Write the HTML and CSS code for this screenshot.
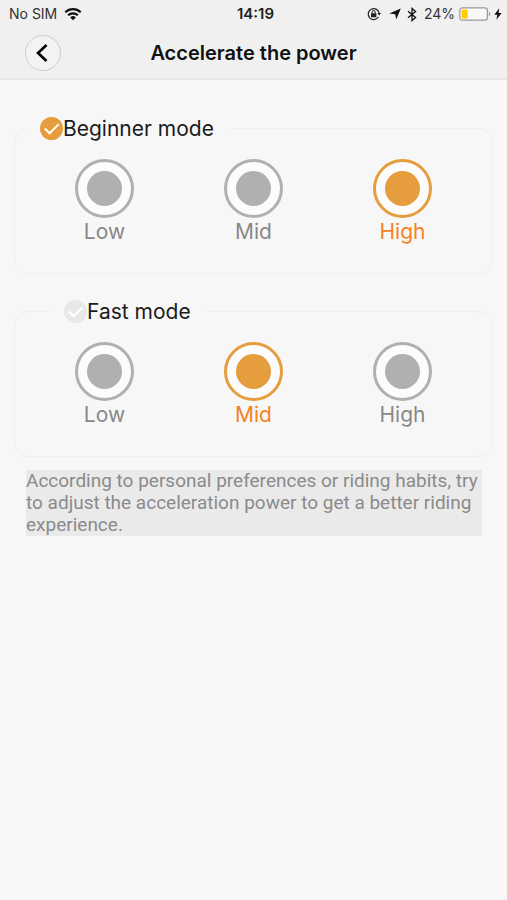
FILE: index.html
```html
<!DOCTYPE html>
<html lang="en">
<head>
<meta charset="utf-8">
<meta name="viewport" content="width=device-width, initial-scale=1">
<title>Accelerate the power</title>
<link rel="stylesheet" href="styles.css">
</head>
<body>
<header class="header">
  <div class="status">
    <div class="status-left">
      <span>No SIM</span>
      <svg width="18" height="14" viewBox="0 0 18 14" fill="none" stroke="#111" stroke-width="2.2" aria-hidden="true">
        <path d="M1.3 5.3a11 11 0 0 1 15.4 0M4.1 8.3a7 7 0 0 1 9.8 0"/>
        <path d="M6.2 10.4a4 4 0 0 1 5.6 0L9 13.2z" fill="#111" stroke="none"/>
      </svg>
    </div>
    <time class="clock">14:19</time>
    <div class="status-right">
      <svg width="14" height="14" viewBox="0 0 14 14" fill="none" stroke="#222" aria-hidden="true">
        <path d="M11.4 10A5.500 5.500 0 1 1 12.100 6" stroke-width="1.2"/>
        <path d="M10.300 6h3.700l-1.800 2.600z" fill="#222" stroke="none"/>
        <rect x="4" y="6.200" width="5.400" height="4" rx=".5" fill="#222" stroke="none"/>
        <path d="M5.200 6.500V5a1.500 1.500 0 0 1 3 0v1.500"/>
      </svg>
      <svg class="arrow" width="12" height="12" viewBox="0 0 12 12" aria-hidden="true"><path d="M11.800.4 7.200 11.600 6.300 6.200.2 5.600z" fill="#111"/></svg>
      <svg class="bluetooth" width="10" height="15" viewBox="0 0 10 15" fill="none" stroke="#111" stroke-width="1.3" aria-hidden="true"><path d="M1 4.200 8.600 10.600 5 13.600V1.400L8.600 4.400 1 10.800"/></svg>
      <span>24%</span>
      <svg class="battery" width="32" height="14" viewBox="0 0 32 14" aria-hidden="true">
        <rect x=".8" y=".8" width="27.600" height="12.400" rx="2.600" fill="#f8f8f8" stroke="#999" stroke-width="1.2"/>
        <rect x="2.600" y="2.400" width="6" height="9.200" rx=".8" fill="#fc0"/>
        <path d="M29.800 4.800q1.500.6 1.500 2.200t-1.500 2.200z" fill="#999"/>
      </svg>
      <svg class="bolt" width="8" height="12" viewBox="0 0 8 12" aria-hidden="true"><path d="M5.200.3.3 6.800h3L2.400 11.700 7.700 4.900H4.600z" fill="#111"/></svg>
    </div>
  </div>
  <div class="nav">
    <button class="back" type="button" aria-label="Back">
      <svg width="12" height="20" viewBox="0 0 12 20" fill="none" stroke="#000" stroke-width="2.6" aria-hidden="true"><path d="M10.500 2 2 10l8.500 8"/></svg>
    </button>
    <h1 class="title">Accelerate the power</h1>
  </div>
</header>
<main class="content">
  <fieldset class="mode">
    <legend class="mode-head">
      <label class="mode-label">
        <span class="check">
          <input type="radio" name="mode" checked>
          <svg viewBox="0 0 24 24" fill="none" stroke="#fff" stroke-width="2" aria-hidden="true"><path d="m5 12 5 5 9.500-9.500"/></svg>
        </span>Beginner mode
      </label>
    </legend>
    <div class="levels">
      <label class="level"><input type="radio" name="beginner"><span>Low</span></label>
      <label class="level"><input type="radio" name="beginner"><span>Mid</span></label>
      <label class="level"><input type="radio" name="beginner" checked><span>High</span></label>
    </div>
  </fieldset>
  <fieldset class="mode">
    <legend class="mode-head mode-head-inset">
      <label class="mode-label">
        <span class="check">
          <input type="radio" name="mode">
          <svg viewBox="0 0 24 24" fill="none" stroke="#fff" stroke-width="2" aria-hidden="true"><path d="m5 12 5 5 9.500-9.500"/></svg>
        </span>Fast mode
      </label>
    </legend>
    <div class="levels">
      <label class="level"><input type="radio" name="fast"><span>Low</span></label>
      <label class="level"><input type="radio" name="fast" checked><span>Mid</span></label>
      <label class="level"><input type="radio" name="fast"><span>High</span></label>
    </div>
  </fieldset>
  <p class="hint">According to personal preferences or riding habits, try to adjust the acceleration power to get a better riding experience.</p>
</main>
</body>
</html>
```
FILE: styles.css
```css
* {
  box-sizing: border-box;
}

body {
  margin: 0;
  min-height: 100vh;
  background: #f7f7f7;
  color: #1c1c1c;
  font-family: Inter, "Liberation Sans", sans-serif;
}

.header {
  background: #f0f0f0;
  border-bottom: 2px solid #e6e6e6;
}

.status {
  display: grid;
  grid-template-columns: 1fr auto 1fr;
  align-items: center;
  height: 28px;
  padding: 0 5px 0 9px;
  font-size: 14px;
  line-height: 16px;
  color: #333;
}

.status-left,
.status-right {
  display: flex;
  align-items: center;
}

.status-left {
  gap: 7px;
}

.status-right {
  justify-content: flex-end;
}

.arrow {
  margin-left: 8px;
}

.bluetooth {
  margin: 0 7px 0 6px;
}

.battery {
  margin: 0 3px 0 4px;
}

.clock {
  font-weight: 600;
  font-size: 15px;
  color: #222;
}

.nav {
  display: grid;
  grid-template-columns: 36px 1fr 36px;
  align-items: center;
  height: 50px;
  padding: 0 25px;
}

.back {
  display: flex;
  align-items: center;
  justify-content: center;
  width: 36px;
  height: 36px;
  padding: 0 3px 0 0;
  border: 1px solid #ccc;
  border-radius: 50%;
  background: #f3f3f3;
}

.title {
  margin: 0;
  font-size: 20px;
  font-weight: 600;
  text-align: center;
  color: #111;
}

.content {
  padding: 34px 14px 0;
}

.mode {
  min-width: 0;
  margin: 0 0 23px;
  padding: 0 15px 27px;
  border: 1px solid #efefef;
  border-radius: 14px;
}

.mode-head {
  margin-left: -4px;
  padding: 0 14px;
}

.mode-head-inset {
  margin-left: 20px;
}

.mode-label {
  display: flex;
  align-items: center;
  height: 28px;
  font-size: 21px;
}

.check {
  display: grid;
  width: 23px;
  height: 23px;
}

.check input,
.check svg {
  grid-area: 1 / 1;
  width: 100%;
  height: 100%;
  margin: 0;
}

.check svg {
  pointer-events: none;
}

.check input {
  appearance: none;
  border-radius: 50%;
  background: #e8e8e8;
}

.check input:checked {
  background: #e69d3e;
}

.levels {
  display: grid;
  grid-template-columns: repeat(3, 1fr);
  padding-top: 17px;
}

.level {
  display: flex;
  flex-direction: column;
  align-items: center;
  font-size: 21px;
  line-height: 28px;
  color: #888;
}

.level input {
  appearance: none;
  display: grid;
  place-items: center;
  width: 59px;
  height: 59px;
  margin: 0;
  border: 3px solid #b0b0b0;
  border-radius: 50%;
  background: #fcfcfc;
}

.level input::before {
  content: "";
  width: 35px;
  height: 35px;
  border-radius: 50%;
  background: #b0b0b0;
}

.level input:checked {
  border-color: #e69d3e;
}

.level input:checked::before {
  background: #e69d3e;
}

.level input:checked + span {
  color: #f5821f;
}

.hint {
  margin: -10px 11px 0 12px;
  background: #eaeaea;
  font-family: Roboto, "Liberation Sans", sans-serif;
  font-size: 19px;
  line-height: 22px;
  color: #8a8a8a;
}
```
